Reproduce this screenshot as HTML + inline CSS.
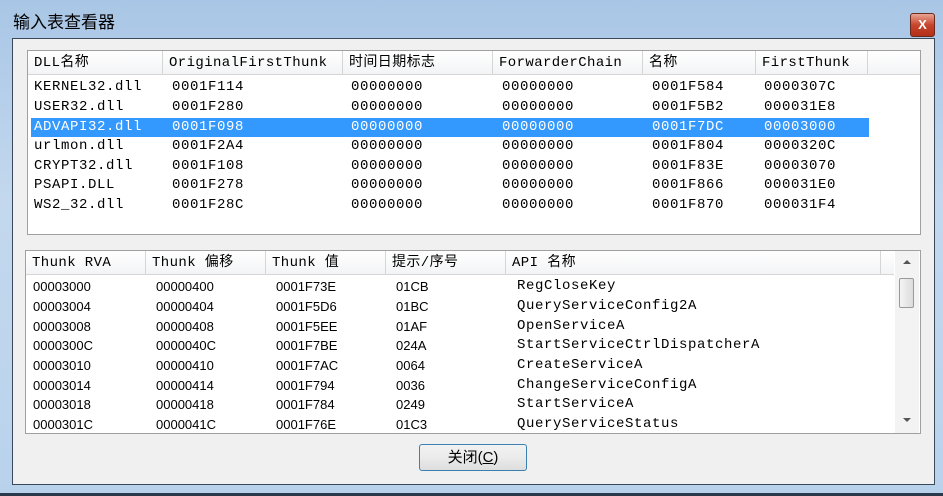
<!DOCTYPE html>
<html><head><meta charset="utf-8"><style>
body{margin:0;width:943px;height:496px;overflow:hidden;background:linear-gradient(#a9c6e6,#c3d8ee 40%,#b9d2ec);position:relative;font-family:"Liberation Mono","Noto Sans CJK SC",monospace;}
.abs{position:absolute}
.title{left:13px;top:8px;font:17px "Liberation Sans","Noto Sans CJK SC",sans-serif;color:#000}
.close{left:910px;top:13px;width:25px;height:24px;background:linear-gradient(#e9a493,#c7452c 50%,#b32f17);border:1px solid #6b2a1e;border-radius:3px;color:#fff;font:bold 13px "Liberation Sans",sans-serif;text-align:center;line-height:22px;box-sizing:border-box}
.client{left:12px;top:38px;width:923px;height:447px;background:#f0f0f0;border:1px solid #3a4a5a;box-sizing:border-box}
.list{background:#fff;border:1px solid #a0a0a0;box-sizing:border-box}
.hdr{background:linear-gradient(#fff,#f3f4f6);border-bottom:1px solid #d5d5d5;position:absolute;left:0;top:0}
.hc{position:absolute;top:0;border-right:1px solid #d5d5d5;font-size:14px;padding-left:6px;box-sizing:border-box;white-space:nowrap;letter-spacing:.4px}
.row{position:absolute;height:19px;font-size:14px;line-height:19px;white-space:nowrap;letter-spacing:.6px}
.row span{position:absolute}
.sel{background:#3399ff;color:#fff}
.b .row span.n{font:13px "Liberation Sans",sans-serif;line-height:19px;letter-spacing:0}
.btn{left:419px;top:444px;width:108px;height:27px;border:1px solid #3c7fb1;border-radius:3px;background:linear-gradient(#f2f2f2,#ebebeb 50%,#dddddd);box-sizing:border-box;text-align:center;font:15px "Liberation Sans","Noto Sans CJK SC",sans-serif;line-height:25px}
</style></head><body>
<div class="abs title">输入表查看器</div>
<div class="abs close">X</div>
<div class="abs client"></div>
<div class="abs list" style="left:27px;top:50px;width:894px;height:185px">
 <div class="hdr" style="width:892px;height:23px">
  <div class="hc" style="left:0;width:135px;height:23px;line-height:25px">DLL名称</div>
  <div class="hc" style="left:135px;width:180px;height:23px;line-height:25px">OriginalFirstThunk</div>
  <div class="hc" style="left:315px;width:150px;height:23px;line-height:25px">时间日期标志</div>
  <div class="hc" style="left:465px;width:150px;height:23px;line-height:25px">ForwarderChain</div>
  <div class="hc" style="left:615px;width:113px;height:23px;line-height:25px">名称</div>
  <div class="hc" style="left:728px;width:112px;height:23px;line-height:25px">FirstThunk</div>
 </div>
</div>
<div class="abs" style="left:31px;top:78px;width:838px;font-size:14px">
 <div class="row" style="top:0;width:838px"><span style="left:3px">KERNEL32.dll</span><span style="left:141px">0001F114</span><span style="left:320px">00000000</span><span style="left:471px">00000000</span><span style="left:621px">0001F584</span><span style="left:733px">0000307C</span></div>
 <div class="row" style="top:20px;width:838px"><span style="left:3px">USER32.dll</span><span style="left:141px">0001F280</span><span style="left:320px">00000000</span><span style="left:471px">00000000</span><span style="left:621px">0001F5B2</span><span style="left:733px">000031E8</span></div>
 <div class="row sel" style="top:40px;width:838px"><span style="left:3px">ADVAPI32.dll</span><span style="left:141px">0001F098</span><span style="left:320px">00000000</span><span style="left:471px">00000000</span><span style="left:621px">0001F7DC</span><span style="left:733px">00003000</span></div>
 <div class="row" style="top:59px;width:838px"><span style="left:3px">urlmon.dll</span><span style="left:141px">0001F2A4</span><span style="left:320px">00000000</span><span style="left:471px">00000000</span><span style="left:621px">0001F804</span><span style="left:733px">0000320C</span></div>
 <div class="row" style="top:79px;width:838px"><span style="left:3px">CRYPT32.dll</span><span style="left:141px">0001F108</span><span style="left:320px">00000000</span><span style="left:471px">00000000</span><span style="left:621px">0001F83E</span><span style="left:733px">00003070</span></div>
 <div class="row" style="top:98px;width:838px"><span style="left:3px">PSAPI.DLL</span><span style="left:141px">0001F278</span><span style="left:320px">00000000</span><span style="left:471px">00000000</span><span style="left:621px">0001F866</span><span style="left:733px">000031E0</span></div>
 <div class="row" style="top:118px;width:838px"><span style="left:3px">WS2_32.dll</span><span style="left:141px">0001F28C</span><span style="left:320px">00000000</span><span style="left:471px">00000000</span><span style="left:621px">0001F870</span><span style="left:733px">000031F4</span></div>
</div>
<div class="abs list b" style="left:25px;top:250px;width:896px;height:184px">
 <div class="hdr" style="width:868px;height:23px">
  <div class="hc" style="left:0;width:120px;height:23px;line-height:25px">Thunk RVA</div>
  <div class="hc" style="left:120px;width:120px;height:23px;line-height:25px">Thunk 偏移</div>
  <div class="hc" style="left:240px;width:120px;height:23px;line-height:25px">Thunk 值</div>
  <div class="hc" style="left:360px;width:120px;height:23px;line-height:25px">提示/序号</div>
  <div class="hc" style="left:480px;width:375px;height:23px;line-height:25px">API 名称</div>
 </div>
 <div class="abs" style="left:869px;top:0;width:24px;height:182px;background:#f3f3f3">
  <div class="abs" style="left:8px;top:9px;border:4px solid transparent;border-bottom:4px solid #555;border-top:0"></div>
  <div class="abs" style="left:4px;top:27px;width:15px;height:30px;border:1px solid #999;border-radius:2px;background:linear-gradient(90deg,#f4f4f4,#dcdcdc);box-sizing:border-box"></div>
  <div class="abs" style="left:8px;top:167px;border:4px solid transparent;border-top:4px solid #555;border-bottom:0"></div>
 </div>
 <div class="abs" style="left:7px;top:26px">
  <div class="row" style="top:0"><span class="n" style="left:0">00003000</span><span class="n" style="left:123px">00000400</span><span class="n" style="left:243px">0001F73E</span><span class="n" style="left:363px">01CB</span><span style="left:484px">RegCloseKey</span></div>
  <div class="row" style="top:20px"><span class="n" style="left:0">00003004</span><span class="n" style="left:123px">00000404</span><span class="n" style="left:243px">0001F5D6</span><span class="n" style="left:363px">01BC</span><span style="left:484px">QueryServiceConfig2A</span></div>
  <div class="row" style="top:40px"><span class="n" style="left:0">00003008</span><span class="n" style="left:123px">00000408</span><span class="n" style="left:243px">0001F5EE</span><span class="n" style="left:363px">01AF</span><span style="left:484px">OpenServiceA</span></div>
  <div class="row" style="top:59px"><span class="n" style="left:0">0000300C</span><span class="n" style="left:123px">0000040C</span><span class="n" style="left:243px">0001F7BE</span><span class="n" style="left:363px">024A</span><span style="left:484px">StartServiceCtrlDispatcherA</span></div>
  <div class="row" style="top:79px"><span class="n" style="left:0">00003010</span><span class="n" style="left:123px">00000410</span><span class="n" style="left:243px">0001F7AC</span><span class="n" style="left:363px">0064</span><span style="left:484px">CreateServiceA</span></div>
  <div class="row" style="top:99px"><span class="n" style="left:0">00003014</span><span class="n" style="left:123px">00000414</span><span class="n" style="left:243px">0001F794</span><span class="n" style="left:363px">0036</span><span style="left:484px">ChangeServiceConfigA</span></div>
  <div class="row" style="top:118px"><span class="n" style="left:0">00003018</span><span class="n" style="left:123px">00000418</span><span class="n" style="left:243px">0001F784</span><span class="n" style="left:363px">0249</span><span style="left:484px">StartServiceA</span></div>
  <div class="row" style="top:138px"><span class="n" style="left:0">0000301C</span><span class="n" style="left:123px">0000041C</span><span class="n" style="left:243px">0001F76E</span><span class="n" style="left:363px">01C3</span><span style="left:484px">QueryServiceStatus</span></div>
 </div>
</div>
<div class="abs btn">关闭(<u>C</u>)</div>
<div class="abs" style="left:0;top:493px;width:943px;height:3px;background:#2a3a4a"></div>
</body></html>
